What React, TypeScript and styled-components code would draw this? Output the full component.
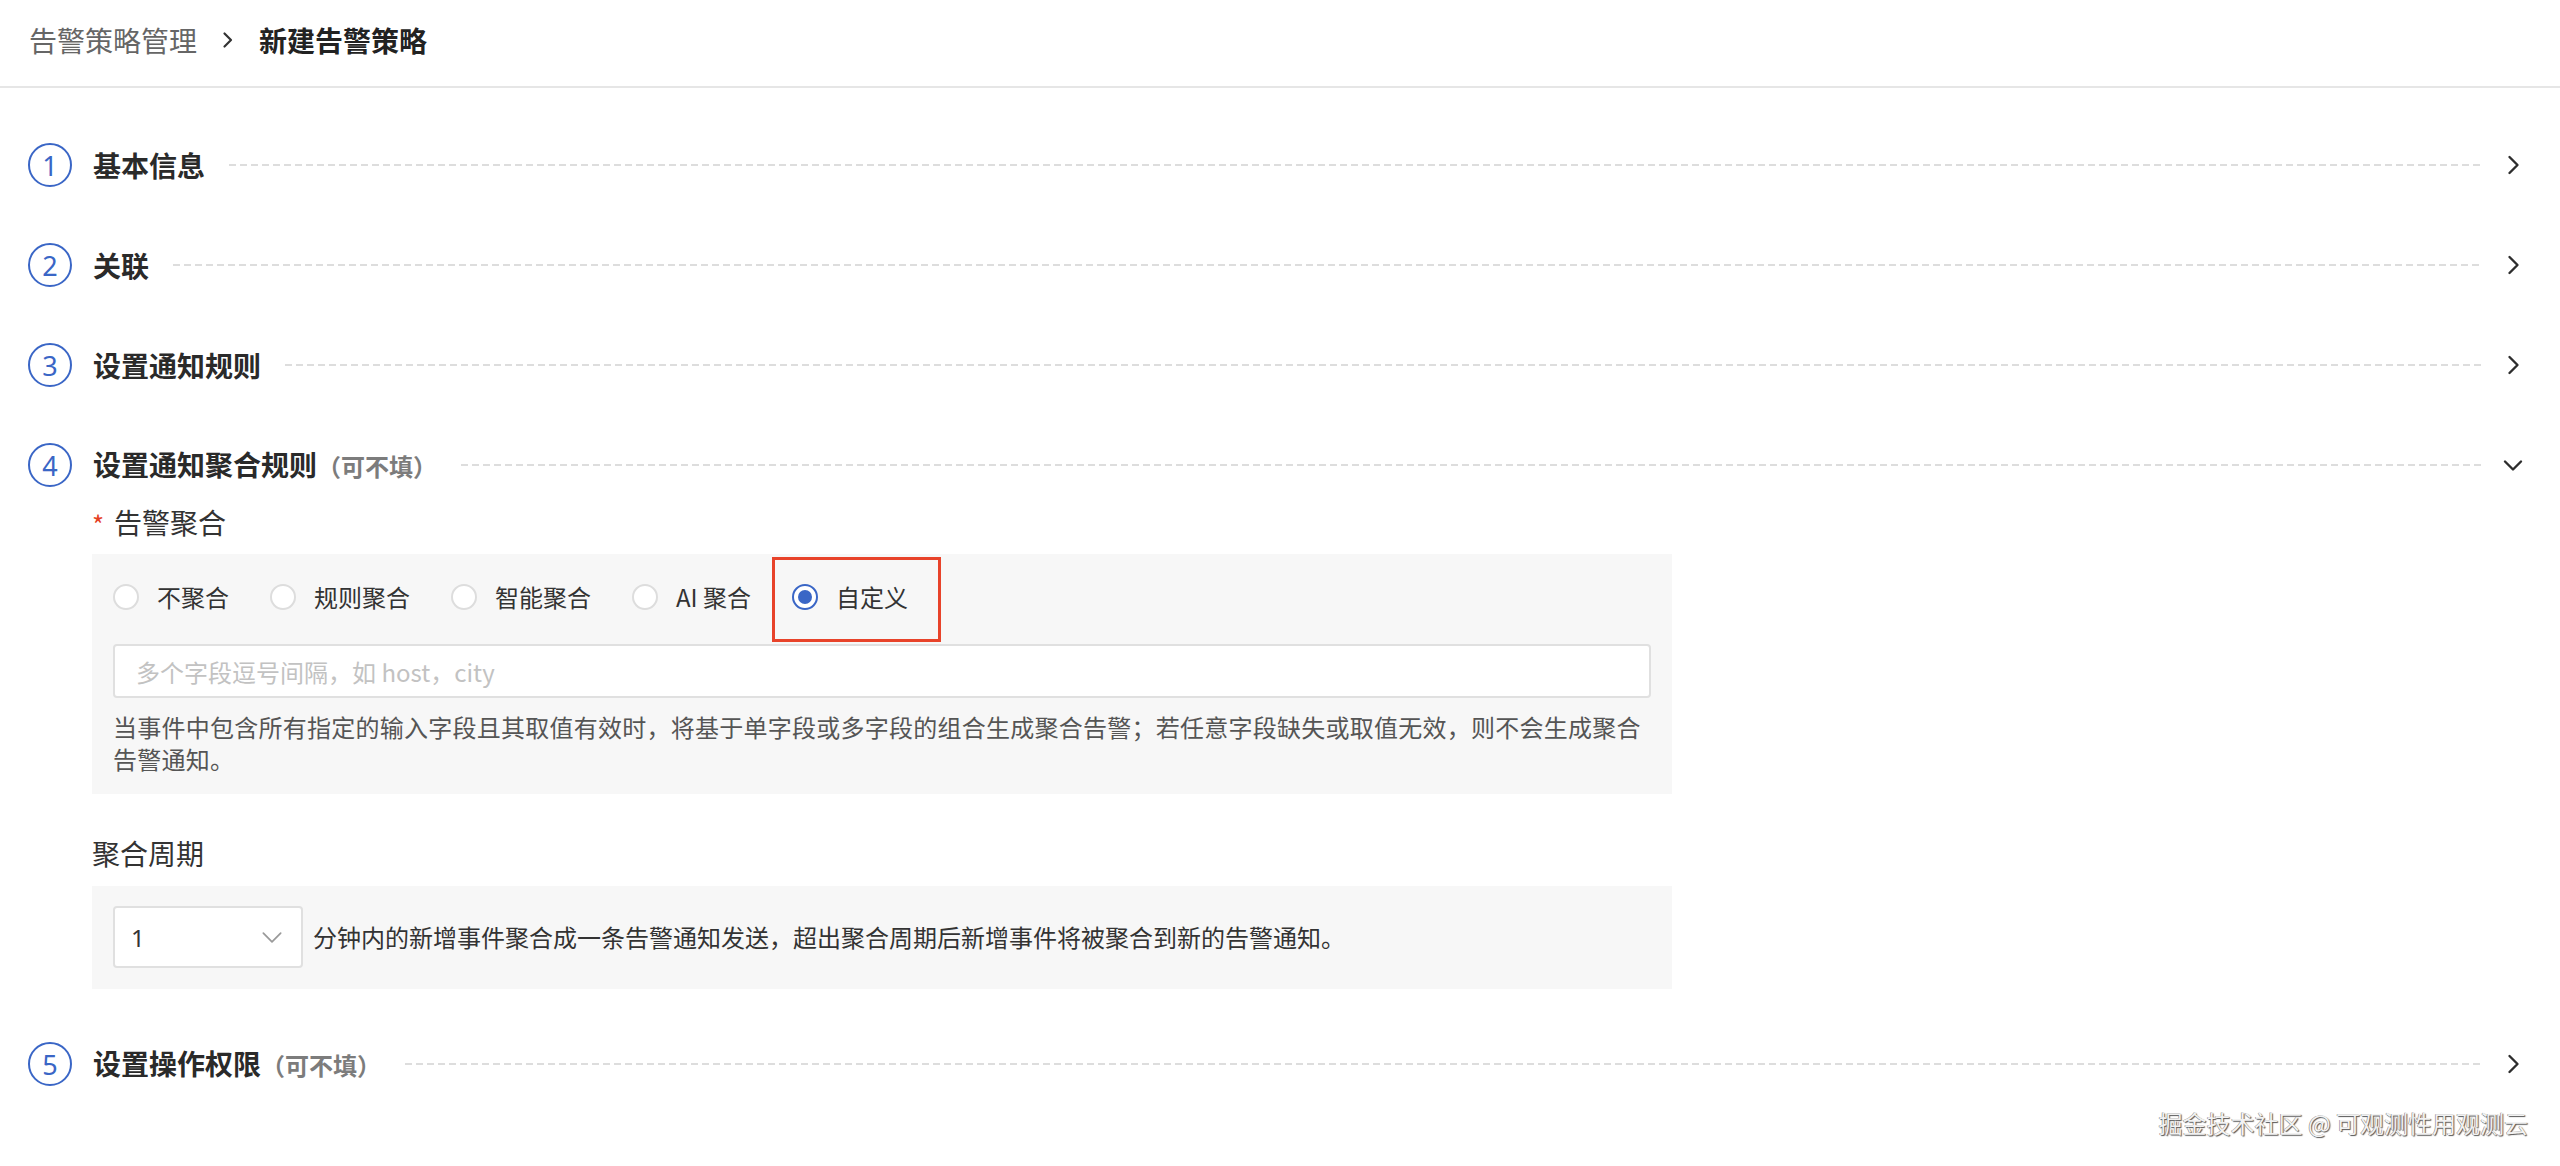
import React from "react";
import styled, { createGlobalStyle } from "styled-components";

const GlobalStyle = createGlobalStyle`
  html, body { margin: 0; padding: 0; background: #ffffff; }
  * { box-sizing: border-box; }
  body {
    font-family: "Noto Sans CJK SC", "Noto Sans", sans-serif;
    color: #333333;
  }
`;

const Page = styled.div`
  position: relative;
  min-height: 1166px;
  width: 2560px;
  background: #ffffff;
  overflow: hidden;
`;

const Header = styled.header`
  height: 88px;
  display: flex;
  align-items: center;
  padding: 0 29px 6px;
  border-bottom: 2px solid #e6e6e6;
`;

const Crumb = styled.span<{ $current?: boolean }>`
  font-size: 28px;
  line-height: 40px;
  color: ${(p) => (p.$current ? "#222222" : "#666666")};
  font-weight: ${(p) => (p.$current ? 700 : 400)};
`;

const CrumbSep = styled.span`
  display: flex;
  align-items: center;
  justify-content: center;
  width: 62px;
  height: 40px;
`;

const Sections = styled.main`
  display: flex;
  flex-direction: column;
  gap: 40px;
  padding-top: 47px;
`;

const Section = styled.section`
  display: flex;
  flex-direction: column;
`;

const StepRow = styled.div`
  height: 60px;
  display: flex;
  align-items: center;
  padding: 0 35px 0 28px;
`;

const StepBadge = styled.div`
  width: 44px;
  height: 44px;
  border-radius: 50%;
  border: 2.5px solid #3a66c6;
  color: #3a66c6;
  display: flex;
  align-items: center;
  justify-content: center;
  font-family: "Noto Sans", "Open Sans", sans-serif;
  font-size: 27px;
  line-height: 1;
  flex: none;
`;

const StepTitle = styled.h2`
  margin: 0 0 0 21px;
  font-size: 28px;
  line-height: 40px;
  font-weight: 700;
  color: #2a2a2a;
  white-space: nowrap;
`;

const Optional = styled.span`
  font-size: 24px;
  font-weight: 700;
  color: #7c7c7c;
`;

const Dash = styled.div`
  flex: 1;
  height: 2px;
  margin: 0 18px 0 24px;
  background-image: linear-gradient(to right, #dddddd 0 7px, transparent 7px 11px);
  background-size: 11px 2px;
  background-repeat: repeat-x;
`;

const ChevronBox = styled.div`
  width: 24px;
  height: 24px;
  display: flex;
  align-items: center;
  justify-content: center;
  flex: none;
`;

const StepBody = styled.div`
  margin-left: 92px;
  width: 1580px;
  margin-bottom: 5px;
  display: flex;
  flex-direction: column;
`;

const FieldLabel = styled.div<{ $top: number }>`
  display: flex;
  align-items: center;
  margin-top: ${(p) => p.$top}px;
  font-size: 28px;
  line-height: 40px;
  color: #333333;
`;

const Required = styled.span`
  color: #e5401f;
  font-size: 26px;
  width: 12px;
  margin-right: 10px;
  line-height: 40px;
  padding-top: 4px;
`;

const Panel = styled.div<{ $top: number }>`
  margin-top: ${(p) => p.$top}px;
  background: #f7f7f7;
  padding: 0 21px 19px;
  display: flex;
  flex-direction: column;
`;

const RadioGroup = styled.div`
  height: 86px;
  display: flex;
  align-items: stretch;
  gap: 41px;
`;

const RadioOption = styled.label`
  position: relative;
  display: flex;
  align-items: center;
  gap: 18px;
  font-size: 24px;
  line-height: 34px;
  color: #333333;
  white-space: nowrap;
`;

const RadioDot = styled.span<{ $checked?: boolean }>`
  width: 26px;
  height: 26px;
  border-radius: 50%;
  background: #ffffff;
  border: 2px solid ${(p) => (p.$checked ? "#3a66c6" : "#dddddd")};
  display: flex;
  align-items: center;
  justify-content: center;
  flex: none;
  &::after {
    content: "";
    display: ${(p) => (p.$checked ? "block" : "none")};
    width: 14px;
    height: 14px;
    border-radius: 50%;
    background: #3a66c6;
  }
`;

const Highlight = styled.span`
  position: absolute;
  left: -20px;
  right: -33px;
  top: 3px;
  bottom: -2px;
  border: 3px solid #e8432a;
  pointer-events: none;
`;

const TextInput = styled.input`
  margin-top: 4px;
  height: 54px;
  width: 100%;
  border: 2px solid #e0e0e0;
  border-radius: 4px;
  background: #ffffff;
  padding: 0 21px;
  font-family: "Noto Sans CJK SC", "Noto Sans", sans-serif;
  font-size: 24px;
  color: #333333;
  outline: none;
  &::placeholder {
    color: #c2c2c2;
  }
`;

const Hint = styled.p`
  margin: 13px 0 0;
  font-size: 24px;
  letter-spacing: 0.25px;
  line-height: 32px;
  color: #555555;
`;

const PeriodPanel = styled.div`
  margin-top: 13px;
  background: #f7f7f7;
  padding: 20px 21px 21px;
  display: flex;
  align-items: center;
`;

const SelectBox = styled.div`
  width: 190px;
  height: 62px;
  border: 2px solid #e0e0e0;
  border-radius: 4px;
  background: #ffffff;
  display: flex;
  align-items: center;
  justify-content: space-between;
  padding: 0 16px 0 16px;
  font-family: "Noto Sans", sans-serif;
  font-size: 24px;
  color: #333333;
  flex: none;
`;

const PeriodText = styled.span`
  margin-left: 10px;
  font-size: 24px;
  line-height: 34px;
  color: #333333;
  white-space: nowrap;
`;

const Watermark = styled.div`
  position: absolute;
  right: 32px;
  bottom: 26px;
  font-size: 24px;
  line-height: 34px;
  color: #f2f2f2;
  text-shadow: 1px 1px 1px #555555, -0.5px -0.5px 0.5px #777777;
  white-space: nowrap;
`;

const ChevronRight = () => (
  <svg width="24" height="24" viewBox="0 0 24 24" fill="none">
    <path d="M8.5 4 L16.5 12 L8.5 20" stroke="#2d2d2d" strokeWidth="2.4" strokeLinecap="round" strokeLinejoin="round" />
  </svg>
);

const ChevronDown = ({ color = "#2d2d2d", size = 24, width = 2.4 }: { color?: string; size?: number; width?: number }) => (
  <svg width={size} height={size} viewBox="0 0 24 24" fill="none">
    <path d="M4 8.5 L12 16.5 L20 8.5" stroke={color} strokeWidth={width} strokeLinecap="round" strokeLinejoin="round" />
  </svg>
);

const CrumbChevron = () => (
  <svg width="14" height="18" viewBox="0 0 14 18" fill="none">
    <path d="M3.5 2.5 L10 9 L3.5 15.5" stroke="#333333" strokeWidth="2.2" strokeLinecap="round" strokeLinejoin="round" />
  </svg>
);

type Step = { n: number; title: string; optional?: boolean; open?: boolean };

const steps: Step[] = [
  { n: 1, title: "基本信息" },
  { n: 2, title: "关联" },
  { n: 3, title: "设置通知规则" },
  { n: 4, title: "设置通知聚合规则", optional: true, open: true },
  { n: 5, title: "设置操作权限", optional: true },
];

const radios = [
  { label: "不聚合" },
  { label: "规则聚合" },
  { label: "智能聚合" },
  { label: "AI 聚合" },
  { label: "自定义", checked: true },
];

const StepHeader = ({ step }: { step: Step }) => (
  <StepRow>
    <StepBadge>{step.n}</StepBadge>
    <StepTitle>
      {step.title}
      {step.optional && <Optional>（可不填）</Optional>}
    </StepTitle>
    <Dash />
    <ChevronBox>{step.open ? <ChevronDown /> : <ChevronRight />}</ChevronBox>
  </StepRow>
);

const AggregationBody = () => (
  <StepBody>
    <FieldLabel $top={5}>
      <Required>*</Required>
      告警聚合
    </FieldLabel>
    <Panel $top={10}>
      <RadioGroup>
        {radios.map((r) => (
          <RadioOption key={r.label}>
            <RadioDot $checked={r.checked} />
            {r.label}
            {r.checked && <Highlight />}
          </RadioOption>
        ))}
      </RadioGroup>
      <TextInput placeholder="多个字段逗号间隔，如 host，city" />
      <Hint>
        当事件中包含所有指定的输入字段且其取值有效时，将基于单字段或多字段的组合生成聚合告警；若任意字段缺失或取值无效，则不会生成聚合告警通知。
      </Hint>
    </Panel>
    <FieldLabel $top={39}>聚合周期</FieldLabel>
    <PeriodPanel>
      <SelectBox>
        <span>1</span>
        <ChevronDown color="#9a9a9a" size={26} width={1.6} />
      </SelectBox>
      <PeriodText>分钟内的新增事件聚合成一条告警通知发送，超出聚合周期后新增事件将被聚合到新的告警通知。</PeriodText>
    </PeriodPanel>
  </StepBody>
);

export default function App() {
  return (
    <>
      <GlobalStyle />
      <Page>
        <Header>
          <Crumb>告警策略管理</Crumb>
          <CrumbSep>
            <CrumbChevron />
          </CrumbSep>
          <Crumb $current>新建告警策略</Crumb>
        </Header>
        <Sections>
          {steps.map((s) => (
            <Section key={s.n}>
              <StepHeader step={s} />
              {s.open && <AggregationBody />}
            </Section>
          ))}
        </Sections>
        <Watermark>掘金技术社区 @ 可观测性用观测云</Watermark>
      </Page>
    </>
  );
}
